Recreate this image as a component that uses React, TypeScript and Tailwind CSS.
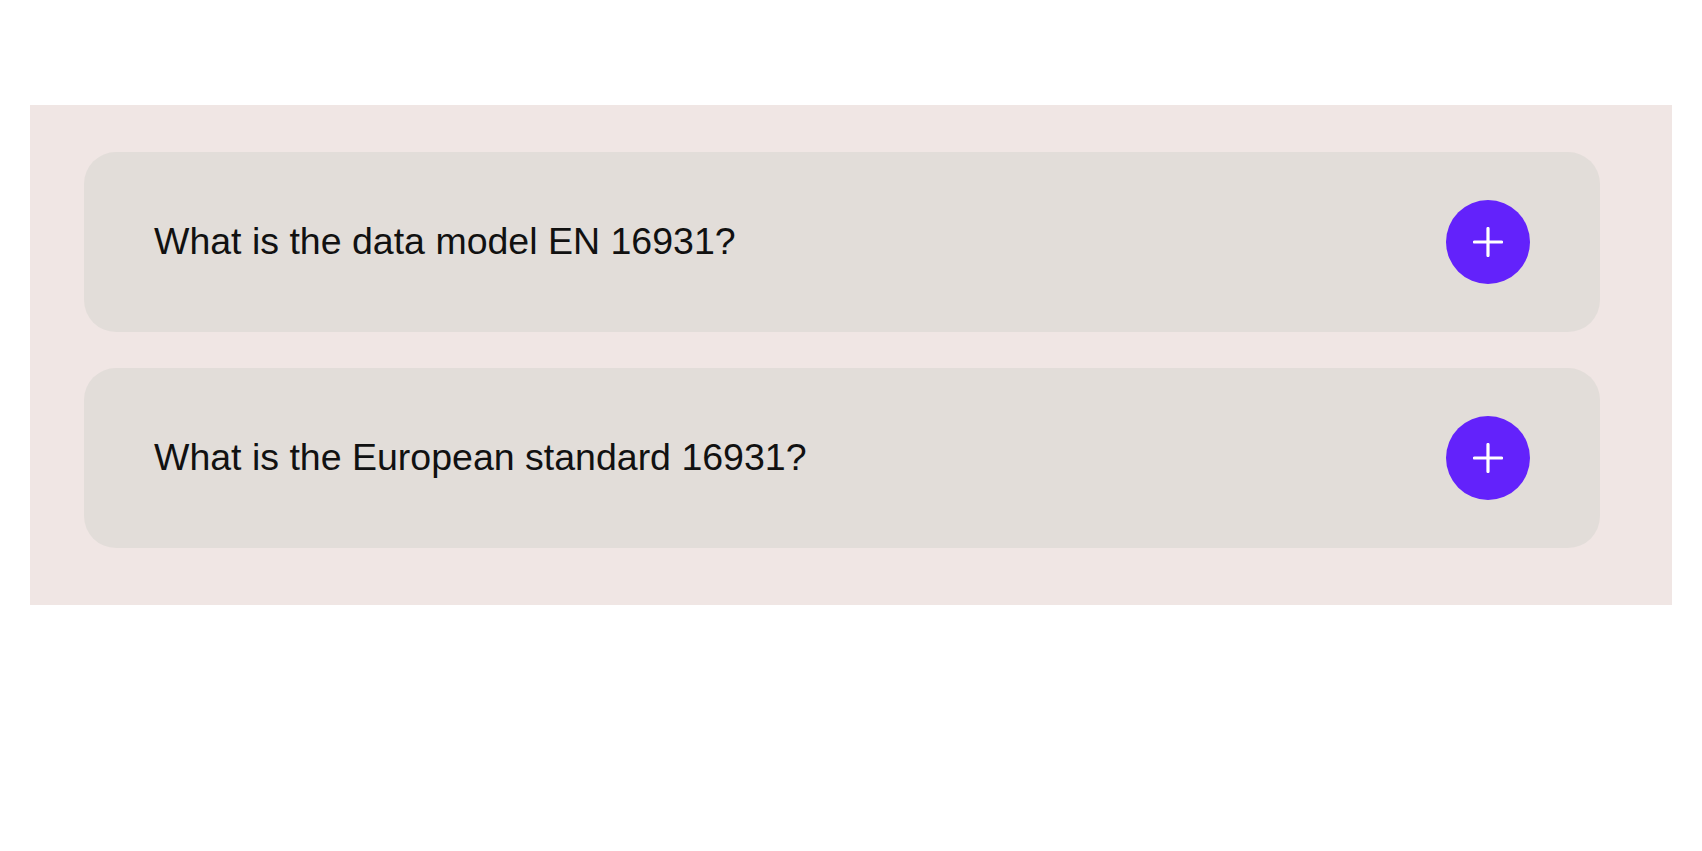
const faqs = [
  "What is the data model EN 16931?",
  "What is the European standard 16931?",
];

function PlusIcon() {
  return (
    <svg width="30" height="30" viewBox="0 0 30 30" fill="none" aria-hidden="true">
      <path d="M15 1.5v27M1.5 15h27" stroke="#fff" strokeWidth="3.2" strokeLinecap="round" />
    </svg>
  );
}

export default function App() {
  return (
    <div className="min-h-screen bg-white pt-[105px] pl-[30px] font-['Liberation_Sans',Arial,sans-serif]">
      <section className="w-[1642px] bg-[#f0e6e4] pt-[47px] pb-[57px] pl-[54px] pr-[72px]">
        <div className="flex flex-col gap-[36px]">
          {faqs.map((q) => (
            <div
              key={q}
              className="flex h-[180px] items-center justify-between rounded-[32px] bg-[#e2ddd9] pl-[70px] pr-[70px]"
            >
              <h3 className="text-[37.5px] leading-none text-[#111]">{q}</h3>
              <button className="flex h-[84px] w-[84px] items-center justify-center rounded-full bg-[#6322fb]">
                <PlusIcon />
              </button>
            </div>
          ))}
        </div>
      </section>
    </div>
  );
}
